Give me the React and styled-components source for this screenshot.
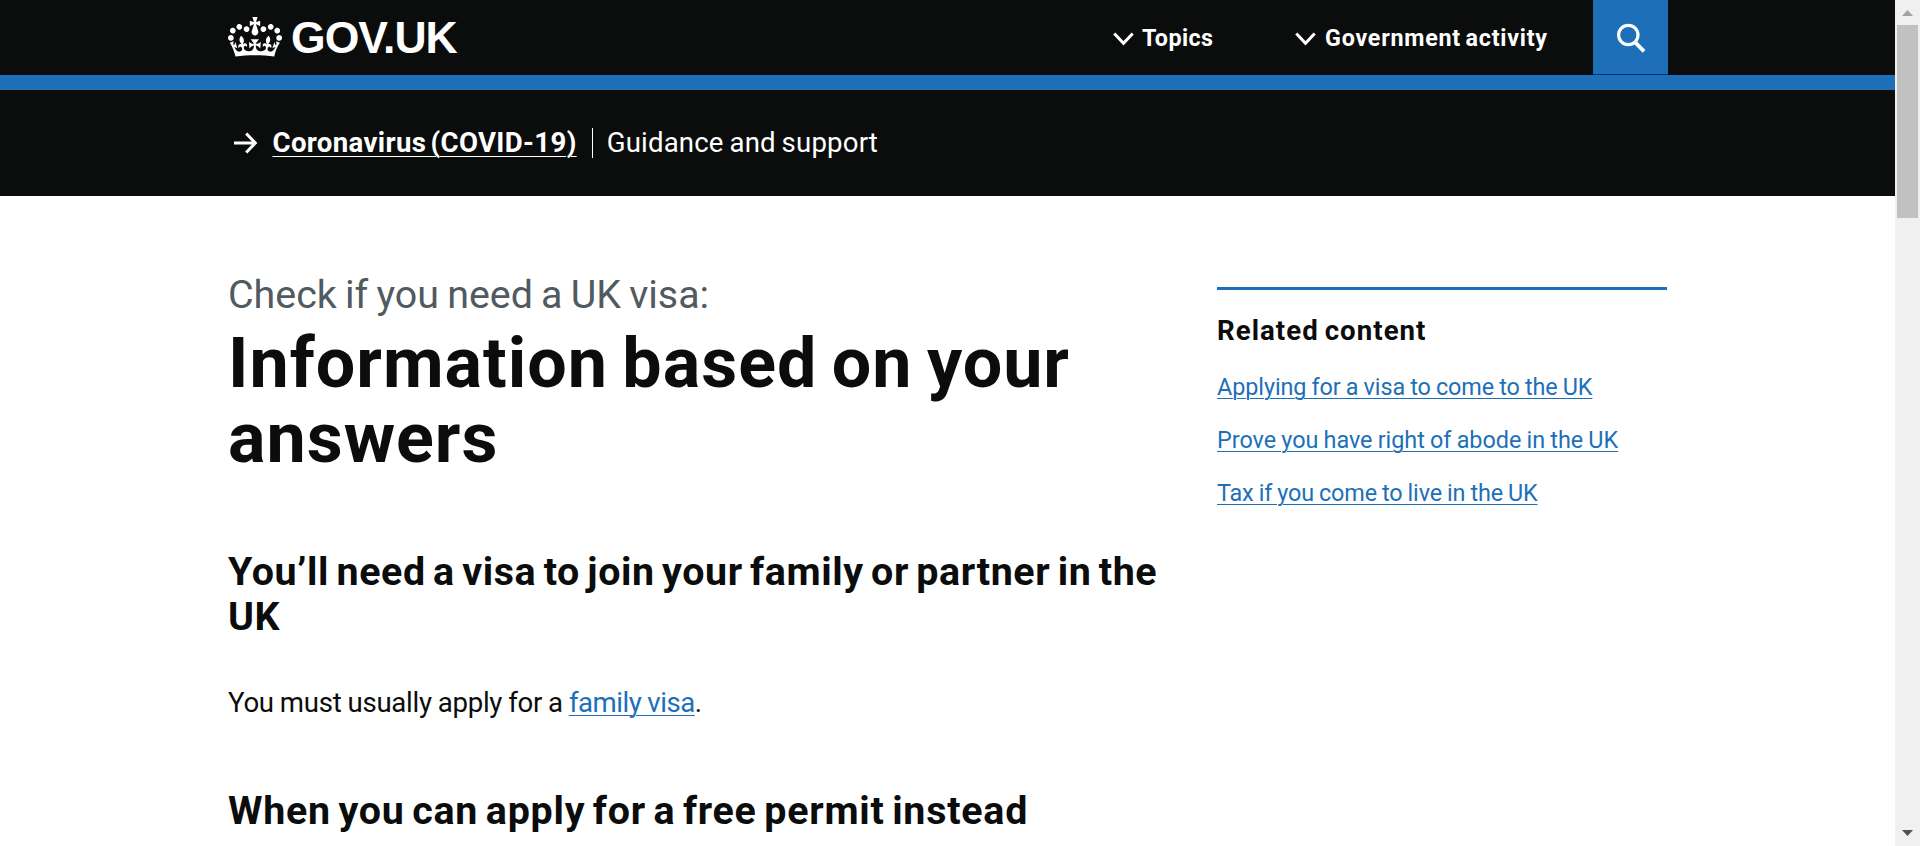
import React from 'react';
import styled, { createGlobalStyle } from 'styled-components';

const ink = '#0b0c0c';
const blue = '#1d70b8';

const GlobalStyle = createGlobalStyle`
  * { box-sizing: border-box; }
  html, body { margin: 0; padding: 0; overflow: hidden; background: #fff; }
  h1, h2, p, ul { margin: 0; padding: 0; }
  body { font-family: Roboto, "Liberation Sans", sans-serif; color: ${ink}; }
`;

const Viewport = styled.div`
  display: flex;
  width: 1920px;
  height: 846px;
  overflow: hidden;
`;

const Page = styled.div`
  flex: 1;
  min-width: 0;
  height: 846px;
  overflow: hidden;
`;

const Container = styled.div`
  display: flex;
  width: 1440px;
  margin-left: 228px;
`;

const Header = styled.header`
  height: 90px;
  background: ${ink};
  border-bottom: 15px solid ${blue};
`;

const HeaderRow = styled(Container)`
  height: 75px;
  justify-content: space-between;
`;

const Logo = styled.a`
  display: flex;
  gap: 9px;
  padding-top: 16.5px;
  color: #fff;
`;

const LogoText = styled.span`
  margin-top: -5px;
  font-family: "Liberation Sans", Arial, sans-serif;
  font-size: 44.5px;
  line-height: 52px;
  font-weight: 700;
  letter-spacing: -0.95px;
`;

const Crown = styled.svg`
  width: 54px;
  height: 40px;
  fill: #fff;
`;

const Nav = styled.nav`
  display: flex;
  align-items: flex-start;
`;

const NavItem = styled.a`
  display: flex;
  width: ${(p) => p.$width}px;
  gap: ${(p) => p.$gap}px;
  padding-top: 22.5px;
  color: #fff;
  font-size: 23.3px;
  line-height: 30px;
  font-weight: 700;
  letter-spacing: ${(p) => p.$spacing}px;
  word-spacing: -2px;
  white-space: nowrap;
`;

const Chevron = styled.svg`
  flex: none;
  width: 21px;
  height: 14px;
  margin-top: 9.5px;
  fill: none;
  stroke: #fff;
  stroke-width: 3;
`;

const SearchButton = styled.a`
  display: flex;
  width: 75px;
  height: 75px;
  padding: 22px 0 0 22px;
  background: ${blue};
  border-bottom: 1px solid #003078;
`;

const SearchIcon = styled.svg`
  width: 34px;
  height: 34px;
  fill: none;
  stroke: #fff;
`;

const Banner = styled.section`
  height: 106px;
  background: ${ink};
  color: #fff;
`;

const BannerRow = styled(Container)`
  padding: 38px 0 0 6px;
  font-size: 27.6px;
  line-height: 30px;
`;

const Arrow = styled.svg`
  width: 24px;
  height: 22px;
  margin: 3.5px 14.5px 0 0;
  fill: none;
  stroke: #fff;
  stroke-width: 3;
`;

const BannerLink = styled.a`
  height: 30px;
  font-weight: 700;
  letter-spacing: 0.35px;
  word-spacing: -3px;
  text-decoration: underline;
  text-decoration-thickness: 1px;
  text-underline-offset: 4px;
`;

const BannerNote = styled.span`
  height: 30px;
  margin-left: 15.5px;
  padding-left: 13.5px;
  border-left: 1px solid #fff;
  letter-spacing: 0.17px;
  word-spacing: -1.2px;
`;

const Main = styled(Container)`
  align-items: flex-start;
`;

const Article = styled.main`
  width: 989px;
  padding-top: 76px;
`;

const Caption = styled.p`
  color: #505a5f;
  font-size: 39.4px;
  line-height: 45px;
  letter-spacing: -0.02px;
  word-spacing: -1.5px;
`;

const Title = styled.h1`
  width: 940px;
  margin-top: 8.5px;
  font-size: 70px;
  line-height: 75px;
  font-weight: 700;
  letter-spacing: 1px;
  word-spacing: -4px;
`;

const Subtitle = styled.h2`
  width: 950px;
  margin-top: ${(p) => p.$top}px;
  font-size: 39.4px;
  line-height: 45px;
  font-weight: 700;
  letter-spacing: ${(p) => p.$spacing}px;
  word-spacing: -3px;
`;

const Paragraph = styled.p`
  margin-top: 45px;
  font-size: 27.6px;
  line-height: 37.5px;
  letter-spacing: -0.28px;
  word-spacing: -0.5px;
`;

const Link = styled.a`
  color: ${blue};
  letter-spacing: ${(p) => p.$spacing}px;
  text-decoration: underline;
  text-decoration-thickness: 1px;
  text-underline-offset: 3px;
`;

const Aside = styled.aside`
  width: 450px;
  margin-top: 91px;
  padding-top: 25.5px;
  border-top: 3px solid ${blue};
`;

const AsideTitle = styled.h2`
  font-size: 27.6px;
  line-height: 30px;
  font-weight: 700;
  letter-spacing: 1.05px;
  word-spacing: -2px;
`;

const LinkList = styled.ul`
  display: flex;
  flex-direction: column;
  gap: 23px;
  margin-top: 26.5px;
  list-style: none;
  font-size: 23.4px;
  line-height: 30px;
  word-spacing: -0.6px;
  white-space: nowrap;
`;

const Scrollbar = styled.div`
  display: flex;
  flex-direction: column;
  justify-content: space-between;
  width: 25px;
  height: 846px;
  padding: 10px 2px;
  background: #f0f0f0;
`;

const ScrollTop = styled.div`
  display: flex;
  flex-direction: column;
  gap: 9px;
`;

const Thumb = styled.div`
  width: 21px;
  height: 193px;
  background: #c1c1c1;
`;

const ScrollArrow = styled.svg`
  display: block;
  width: 11px;
  height: 6px;
  margin-left: 5px;
  fill: ${(p) => p.$color};
`;

const related = [
  { text: 'Applying for a visa to come to the UK', spacing: -0.08 },
  { text: 'Prove you have right of abode in the UK', spacing: -0.02 },
  { text: 'Tax if you come to live in the UK', spacing: -0.14 },
];

const NavChevron = () => (
  <Chevron viewBox="0 0 21 14"><path d="M1.3 1.5 10.5 11.3 19.7 1.5" /></Chevron>
);

export default function App() {
  return (
    <>
      <GlobalStyle />
      <Viewport>
        <Page>
          <Header>
            <HeaderRow>
              <Logo>
                <Crown viewBox="0 0 132 97" preserveAspectRatio="none">
                  <path d="M25 30.2c3.5 1.5 7.7-.2 9.1-3.7 1.5-3.6-.2-7.8-3.9-9.2-3.6-1.4-7.6.3-9.1 3.9-1.4 3.5.3 7.5 3.9 9zM9 39.5c3.6 1.5 7.8-.2 9.2-3.7 1.5-3.6-.2-7.8-3.9-9.1-3.6-1.5-7.6.2-9.1 3.8-1.4 3.5.3 7.5 3.8 9zM4.4 57.2c3.5 1.5 7.7-.2 9.1-3.8 1.5-3.6-.2-7.7-3.9-9.1-3.5-1.5-7.6.3-9.1 3.8-1.4 3.5.3 7.6 3.9 9.1zm38.3-21.4c3.5 1.5 7.7-.2 9.1-3.8 1.5-3.6-.2-7.7-3.9-9.1-3.6-1.5-7.6.3-9.1 3.8-1.3 3.6.4 7.7 3.9 9.1zm64.4-5.6c-3.6 1.5-7.8-.2-9.1-3.7-1.5-3.6.2-7.8 3.8-9.2 3.6-1.4 7.7.3 9.2 3.9 1.3 3.5-.4 7.5-3.9 9zm15.9 9.3c-3.6 1.5-7.7-.2-9.1-3.7-1.5-3.6.2-7.8 3.7-9.1 3.6-1.5 7.7.2 9.2 3.8 1.5 3.5-.3 7.5-3.8 9zm4.7 17.7c-3.6 1.5-7.8-.2-9.2-3.8-1.5-3.6.2-7.7 3.9-9.1 3.6-1.5 7.7.3 9.2 3.8 1.3 3.5-.4 7.6-3.9 9.1zM89.3 35.8c-3.6 1.5-7.8-.2-9.2-3.8-1.4-3.6.2-7.7 3.9-9.1 3.6-1.5 7.7.3 9.2 3.8 1.4 3.6-.3 7.7-3.9 9.1zM69.7 17.7l8.9 4.7V9.3l-8.9 2.8c-.2-.3-.5-.6-.9-.9L72.4 0H59.6l3.5 11.2c-.3.3-.6.5-.9.9l-8.8-2.8v13.1l8.8-4.7c.3.3.6.7.9.9l-5 15.4v.1c-.2.8-.4 1.6-.4 2.4 0 4.1 3.1 7.5 7 8.1h.2c.3 0 .7.1 1 .1.4 0 .7 0 1-.1h.2c4-.6 7.1-4.1 7.1-8.1 0-.8-.1-1.7-.4-2.4V34l-5.1-15.4c.4-.2.7-.6 1-.9zM66 92.8c16.9 0 32.8 1.1 47.1 3.2 4-16.9 8.9-26.7 14-33.5l-9.6-3.4c1 4.9 1.1 7.2 0 10.2-1.5-1.4-3-4.3-4.2-8.7L108.6 76c2.8-2 5-3.2 7.5-3.3-4.4 9.4-10 11.9-13.6 11.2-4.3-.8-6.3-4.6-5.6-7.9 1-4.7 5.7-5.9 8-.5 4.3-8.7-3-11.4-7.6-8.8 7.1-7.2 7.9-13.5 2.1-21.1-8 6.1-8.1 12.3-4.5 20.8-4.7-5.4-12.1-2.5-9.5 6.2 3.4-5.2 7.9-2 7.2 3.1-.6 4.3-6.4 7.8-13.5 7.2-10.3-.9-10.9-8-11.2-13.8 2.5-.5 7.1 1.8 11 7.3L80.2 60c-4.1 4.4-8 5.3-12.3 5.4 1.4-4.4 8-11.6 8-11.6H55.5s6.4 7.2 7.9 11.6c-4.2-.1-8-1-12.3-5.4l1.4 16.4c3.9-5.5 8.5-7.7 10.9-7.3-.3 5.8-.9 12.8-11.1 13.8-7.2.6-12.9-2.9-13.5-7.2-.7-5 3.8-8.3 7.1-3.1 2.7-8.7-4.6-11.6-9.4-6.2 3.7-8.5 3.6-14.7-4.6-20.8-5.8 7.6-5 13.9 2.2 21.1-4.7-2.6-11.9.1-7.7 8.8 2.3-5.5 7.1-4.2 8.1.5.7 3.3-1.3 7.1-5.7 7.9-3.5.7-9-1.8-13.5-11.2 2.5.1 4.7 1.3 7.5 3.3l-4.7-15.4c-1.2 4.4-2.7 7.2-4.3 8.7-1.1-3-.9-5.3 0-10.2l-9.5 3.4c5 6.9 9.9 16.7 14 33.5 14.8-2.1 30.8-3.2 47.7-3.2z" />
                </Crown>
                <LogoText>GOV.UK</LogoText>
              </Logo>
              <Nav>
                <NavItem $width={182} $gap={8} $spacing={0.4}><NavChevron />Topics</NavItem>
                <NavItem $width={298} $gap={9} $spacing={0.76}><NavChevron />Government activity</NavItem>
                <SearchButton>
                  <SearchIcon viewBox="0 0 34 34">
                    <circle cx="13.3" cy="13" r="9.7" strokeWidth="3.2" />
                    <path d="M20 20.2 29 29.4" strokeWidth="3.8" />
                  </SearchIcon>
                </SearchButton>
              </Nav>
            </HeaderRow>
          </Header>
          <Banner>
            <BannerRow>
              <Arrow viewBox="0 0 24 22"><path d="M0 11H21.5M12.2 1.5 21.3 11 12.2 20.5" /></Arrow>
              <BannerLink>Coronavirus (COVID-19)</BannerLink>
              <BannerNote>Guidance and support</BannerNote>
            </BannerRow>
          </Banner>
          <Main>
            <Article>
              <Caption>Check if you need a UK visa:</Caption>
              <Title>Information based on your answers</Title>
              <Subtitle $top={73} $spacing={0.6}>You’ll need a visa to join your family or partner in the UK</Subtitle>
              <Paragraph>You must usually apply for a <Link $spacing={-0.46}>family visa</Link>.</Paragraph>
              <Subtitle $top={67} $spacing={0.77}>When you can apply for a free permit instead</Subtitle>
            </Article>
            <Aside>
              <AsideTitle>Related content</AsideTitle>
              <LinkList>
                {related.map((item) => (
                  <li key={item.text}><Link $spacing={item.spacing}>{item.text}</Link></li>
                ))}
              </LinkList>
            </Aside>
          </Main>
        </Page>
        <Scrollbar>
          <ScrollTop>
            <ScrollArrow viewBox="0 0 11 6" $color="#a3a3a3"><path d="M5.5 0 11 6H0z" /></ScrollArrow>
            <Thumb />
          </ScrollTop>
          <ScrollArrow viewBox="0 0 11 6" $color="#505050"><path d="M0 0H11L5.5 6z" /></ScrollArrow>
        </Scrollbar>
      </Viewport>
    </>
  );
}
